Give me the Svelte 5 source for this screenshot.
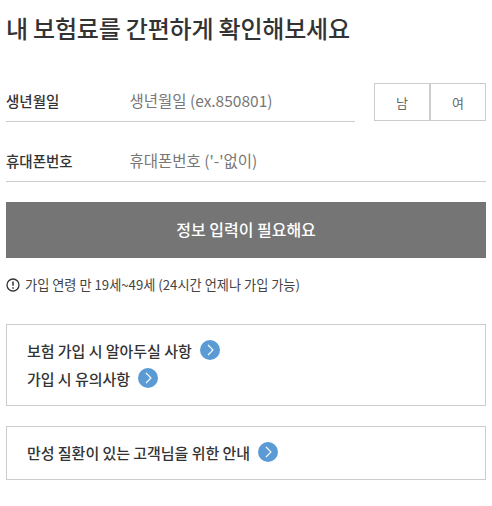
<script>
  let birth = $state('');
  let phone = $state('');
  let gender = $state('');

  const notices = [
    ['보험 가입 시 알아두실 사항', '가입 시 유의사항'],
    ['만성 질환이 있는 고객님을 위한 안내']
  ];
</script>

<div class="page">
  <h1>내 보험료를 간편하게 확인해보세요</h1>

  <div class="row first">
    <label class="field short">
      <span class="label">생년월일</span>
      <input bind:value={birth} placeholder="생년월일 (ex.850801)" />
    </label>
    <div class="gender">
      <button class:selected={gender === 'm'} onclick={() => (gender = 'm')}>남</button>
      <button class:selected={gender === 'f'} onclick={() => (gender = 'f')}>여</button>
    </div>
  </div>

  <div class="row second">
    <label class="field">
      <span class="label">휴대폰번호</span>
      <input bind:value={phone} placeholder="휴대폰번호 ('-'없이)" />
    </label>
  </div>

  <button class="submit">정보 입력이 필요해요</button>

  <p class="hint">
    <svg width="14" height="14" viewBox="0 0 14 14" fill="none" aria-hidden="true">
      <circle cx="7" cy="7" r="6" stroke="#333" stroke-width="1.3" />
      <path d="M7 3.4v4.4" stroke="#333" stroke-width="1.5" />
      <path d="M7 9.2v1.5" stroke="#333" stroke-width="1.5" />
    </svg>
    가입 연령 만 19세~49세 (24시간 언제나 가입 가능)
  </p>

  {#each notices as links}
    <div class="box">
      {#each links as text}
        <a href="#top" class="link">
          {text}
          <svg width="20" height="20" viewBox="0 0 20 20" aria-hidden="true">
            <circle cx="10" cy="10" r="10" fill="#5b9bd5" />
            <path d="M8 5 13 10l-5 5" fill="none" stroke="#fff" stroke-width="1.1" />
          </svg>
        </a>
      {/each}
    </div>
  {/each}
</div>

<style>
  :global(body) {
    background: #fff;
  }

  .page {
    padding: 10px 6px 0;
    font-family: "Noto Sans CJK KR", "Noto Sans", sans-serif;
    color: #333;
  }

  h1 {
    margin: 0;
    font-size: 24px;
    line-height: 35px;
    font-weight: 500;
    letter-spacing: -0.2px;
    color: #333;
  }

  .row {
    display: flex;
    justify-content: space-between;
    align-items: flex-start;
  }

  .first {
    margin-top: 38px;
  }

  .second {
    margin-top: 21px;
  }

  .field {
    flex: 1;
    display: flex;
    align-items: center;
    height: 38px;
    border-bottom: 1px solid #ccc;
  }

  .short {
    flex: 0 0 349px;
  }

  .label {
    width: 123.5px;
    font-size: 14.5px;
    font-weight: 500;
    color: #333;
    margin-top: -4px;
  }

  input {
    flex: 1;
    min-width: 0;
    border: none;
    outline: none;
    padding: 0;
    background: none;
    font: inherit;
    font-size: 15.5px;
    margin-top: -4px;
  }

  input::placeholder {
    color: #777;
    opacity: 1;
  }

  .gender {
    display: flex;
    width: 112px;
    height: 38px;
  }

  .gender button {
    flex: 1;
    padding: 0;
    border: 1px solid #ccc;
    background: #fff;
    font: inherit;
    font-size: 13px;
    color: #666;
  }

  .submit {
    display: block;
    width: 100%;
    height: 56px;
    margin-top: 20px;
    padding: 0 0 2px;
    border: none;
    background: #757575;
    color: #fff;
    font: inherit;
    font-size: 16px;
    font-weight: 500;
  }

  .hint {
    display: flex;
    align-items: center;
    gap: 5px;
    margin: 17px 0 0;
    font-size: 13.2px;
    line-height: 20px;
    color: #444;
  }

  .box {
    display: flex;
    flex-direction: column;
    gap: 8px;
    margin-top: 20px;
    padding: 15px 20px 17px;
    border: 1px solid #ccc;
  }

  .hint + .box {
    margin-top: 29px;
  }

  .link {
    display: flex;
    align-items: center;
    gap: 8px;
    height: 20px;
    font-size: 15px;
    letter-spacing: -0.04px;
    font-weight: 500;
    color: #333;
    text-decoration: none;
  }
</style>
